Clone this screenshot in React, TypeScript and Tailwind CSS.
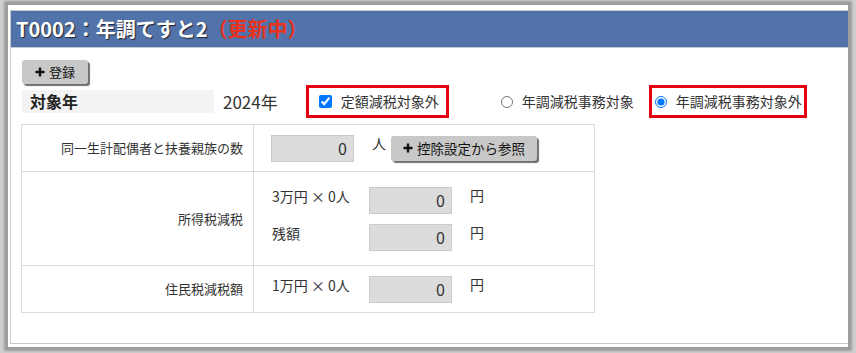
import React from "react";

const font = { fontFamily: '"Noto Sans CJK JP", "Noto Sans", sans-serif' };

const Plus = () => (
	<svg width="10" height="10" viewBox="0 0 10 10" className="shrink-0">
		<path d="M5 0.5v9M0.5 5h9" stroke="#111" strokeWidth="2.4" />
	</svg>
);

const NumBox = ({ value }: { value: string }) => (
	<div className="w-[83px] h-[27px] bg-[#dcdcdc] border border-[#cbcbcb] text-right pr-[6px] text-[16px] leading-[25px] text-[#333]">
		{value}
	</div>
);

const App = () => {
	return (
		<div
			className="w-[856px] h-[353px] bg-[#cfcfcf] pl-[8px] pt-[5px] overflow-hidden"
			style={font}
		>
			<div className="w-[840px] h-[342px] bg-white pt-[5px] pl-[2px] shadow-[0_0_2px_4px_#9c9c9c]">
				<div className="h-[334px] border-l border-t border-b border-[#c8c8c8]">
					<div className="h-[37px] bg-[#5273a9] border-b border-[#c4c9d2] flex items-center pl-[5px] text-[20px] font-bold">
						<span className="text-white [text-shadow:1px_1px_1px_#223]">
							T0002：年調てすと2
						</span>
						<span className="text-[#e8321e]">（更新中）</span>
					</div>

					<div className="pl-[11px] pt-[12px]">
						<button className="w-[66px] h-[24px] bg-[#c8c8c8] rounded-[3px] shadow-[2px_2px_1px_#6f6f6f] flex items-center justify-center gap-[4px] text-[13px] text-[#111]">
							<Plus />
							登録
						</button>

						<div className="flex items-center h-[33px] mt-[1px]">
							<div className="w-[192px] h-[23px] bg-[#f3f3f3] pl-[8px] text-[16px] font-bold leading-[23px] text-[#222]">
								対象年
							</div>
							<div className="ml-[9px] text-[17px] text-[#333]">2024年</div>
							<div className="ml-[28px] w-[143px] h-[33px] border-[3px] border-[#e60012] flex items-center pl-[10px] gap-[9px] text-[14px] text-[#333]">
								<input
									type="checkbox"
									defaultChecked
									className="w-[13px] h-[13px] m-0"
								/>
								<span>定額減税対象外</span>
							</div>
							<div className="ml-[52px] flex items-center gap-[9px] text-[14px] text-[#333]">
								<input type="radio" name="r" className="w-[12px] h-[12px] m-0" />
								<span>年調減税事務対象</span>
							</div>
							<div className="ml-[15px] w-[158px] h-[33px] border-[3px] border-[#e60012] flex items-center pl-[3px] gap-[9px] text-[14px] text-[#333]">
								<input
									type="radio"
									name="r"
									defaultChecked
									className="w-[12px] h-[12px] m-0"
								/>
								<span>年調減税事務対象外</span>
							</div>
						</div>

						<table className="mt-[6px] -ml-[1px] w-[574px] border-collapse text-[#333]">
							<tbody>
								<tr className="h-[47px]">
									<td className="w-[232px] border border-[#dadada] text-right pr-[10px] text-[13px]">
										同一生計配偶者と扶養親族の数
									</td>
									<td className="border border-[#dadada] pl-[17px]">
										<div className="flex items-start">
											<NumBox value="0" />
											<span className="ml-[18px] -mt-[2px] text-[14px]">人</span>
											<button className="ml-[5px] mt-[1px] w-[146px] h-[25px] bg-[#c8c8c8] rounded-[3px] shadow-[2px_2px_1px_#6f6f6f] flex items-center justify-center gap-[4px] text-[13.5px] text-[#111]">
												<Plus />
												控除設定から参照
											</button>
										</div>
									</td>
								</tr>
								<tr className="h-[94px]">
									<td className="border border-[#dadada] text-right pr-[10px] text-[13px]">
										所得税減税
									</td>
									<td className="border border-[#dadada] pl-[18px]">
										<div className="flex flex-col gap-[10px]">
											<div className="flex items-start">
												<span className="w-[97px] text-[14px] leading-[27px] -mt-[4px]">
													3万円 × 0人
												</span>
												<NumBox value="0" />
												<span className="ml-[18px] -mt-[2px] text-[14px]">円</span>
											</div>
											<div className="flex items-start">
												<span className="w-[97px] text-[14px] leading-[27px] -mt-[4px]">
													残額
												</span>
												<NumBox value="0" />
												<span className="ml-[18px] -mt-[2px] text-[14px]">円</span>
											</div>
										</div>
									</td>
								</tr>
								<tr className="h-[47px]">
									<td className="border border-[#dadada] text-right pr-[10px] text-[13px]">
										住民税減税額
									</td>
									<td className="border border-[#dadada] pl-[18px]">
										<div className="flex items-start">
											<span className="w-[97px] text-[14px] leading-[27px] -mt-[4px]">
												1万円 × 0人
											</span>
											<NumBox value="0" />
											<span className="ml-[18px] -mt-[2px] text-[14px]">円</span>
										</div>
									</td>
								</tr>
							</tbody>
						</table>
					</div>
				</div>
			</div>
		</div>
	);
};

export default App;
